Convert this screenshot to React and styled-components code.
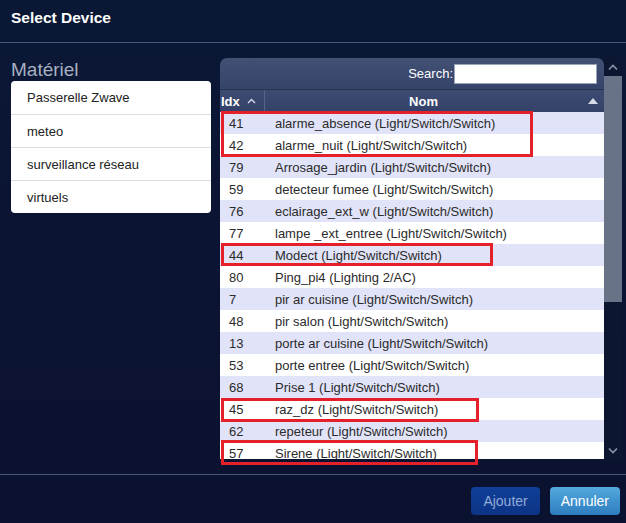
import React from 'react';
import styled, { createGlobalStyle } from 'styled-components';

const GlobalStyle = createGlobalStyle`
  html, body {
    margin: 0;
    padding: 0;
    background: #0a1433;
    font-family: "Liberation Sans", Arial, sans-serif;
  }
`;

const devices = [
  { idx: 41, name: 'alarme_absence (Light/Switch/Switch)' },
  { idx: 42, name: 'alarme_nuit (Light/Switch/Switch)' },
  { idx: 79, name: 'Arrosage_jardin (Light/Switch/Switch)' },
  { idx: 59, name: 'detecteur fumee (Light/Switch/Switch)' },
  { idx: 76, name: 'eclairage_ext_w (Light/Switch/Switch)' },
  { idx: 77, name: 'lampe _ext_entree (Light/Switch/Switch)' },
  { idx: 44, name: 'Modect (Light/Switch/Switch)' },
  { idx: 80, name: 'Ping_pi4 (Lighting 2/AC)' },
  { idx: 7, name: 'pir ar cuisine (Light/Switch/Switch)' },
  { idx: 48, name: 'pir salon (Light/Switch/Switch)' },
  { idx: 13, name: 'porte ar cuisine (Light/Switch/Switch)' },
  { idx: 53, name: 'porte entree (Light/Switch/Switch)' },
  { idx: 68, name: 'Prise 1 (Light/Switch/Switch)' },
  { idx: 45, name: 'raz_dz (Light/Switch/Switch)' },
  { idx: 62, name: 'repeteur (Light/Switch/Switch)' },
  { idx: 57, name: 'Sirene (Light/Switch/Switch)' },
];

const hardware = ['Passerelle Zwave', 'meteo', 'surveillance réseau', 'virtuels'];

// annotation boxes drawn over the rows (row index, row count, width)
const marks = [
  { row: 0, count: 2, width: 312, dy: -1, extra: 2 },
  { row: 6, count: 1, width: 272, dy: -1, extra: 1 },
  { row: 13, count: 1, width: 258, dy: 0, extra: 2 },
  { row: 15, count: 1, width: 257, dy: -2, extra: 3 },
];

const ROW_H = 22;
const HEAD_H = 54; // toolbar + column header, above the first row

const Page = styled.div`
  width: 626px;
  height: 523px;
  display: flex;
  flex-direction: column;
  background: linear-gradient(180deg, #0a1836 0%, #0b1432 50%, #0b1230 100%);
  overflow: hidden;
`;

const Header = styled.div`
  height: 43px;
  flex: none;
  display: flex;
  align-items: center;
  padding: 0 11px 6px;
  box-sizing: border-box;
  border-bottom: 1px solid #48587a;
  color: #ffffff;
  font-size: 15.5px;
  font-weight: bold;
`;

const Body = styled.div`
  flex: 1;
  display: flex;
  gap: 9px;
  padding: 15px 4px 0 11px;
  border-bottom: 1px solid #48587a;
`;

const LeftColumn = styled.div`
  width: 200px;
  flex: none;
  display: flex;
  flex-direction: column;
`;

const Legend = styled.div`
  color: #a8b0c2;
  font-size: 19px;
  line-height: 23px;
  height: 23px;
`;

const HwList = styled.div`
  background: #ffffff;
  border-radius: 4px;
  display: flex;
  flex-direction: column;
`;

const HwItem = styled.div`
  height: 33px;
  display: flex;
  align-items: center;
  padding-left: 16px;
  font-size: 13px;
  color: #222;
  border-top: ${(p) => (p.$first ? 'none' : '1px solid #dddddd')};
  box-sizing: border-box;
`;

const TableArea = styled.div`
  position: relative;
  display: flex;
  height: 401px;
`;

const TablePanel = styled.div`
  width: 384px;
  display: flex;
  flex-direction: column;
  overflow: hidden;
`;

const Toolbar = styled.div`
  height: 31px;
  flex: none;
  display: flex;
  align-items: center;
  justify-content: flex-end;
  padding-right: 7px;
  border-radius: 7px 7px 0 0;
  background: linear-gradient(180deg, #425074 0%, #36446a 100%);
  border-bottom: 1px solid #26314f;
  color: #ffffff;
  font-size: 13px;
`;

const SearchInput = styled.div`
  width: 141px;
  height: 18px;
  margin-left: 1px;
  background: #ffffff;
  border: 1px solid #9aa3b8;
`;

const HeadRow = styled.div`
  height: 22px;
  flex: none;
  display: flex;
  background: linear-gradient(180deg, #3d4b72 0%, #34426a 100%);
  color: #ffffff;
  font-size: 13px;
  font-weight: bold;
`;

const HeadCell = styled.div`
  width: ${(p) => p.$width};
  flex: ${(p) => (p.$grow ? 1 : 'none')};
  display: flex;
  align-items: center;
  justify-content: ${(p) => (p.$center ? 'center' : 'flex-start')};
  padding-left: ${(p) => (p.$center ? '0' : '1px')};
  position: relative;
  border-right: ${(p) => (p.$divider ? '1px solid #56648a' : 'none')};
  box-sizing: border-box;
`;

const HeadLabel = styled.span`
  margin-right: 22px;
`;

const Chevron = styled.svg`
  margin-left: 7px;
`;

const SortArrow = styled.svg`
  position: absolute;
  right: 6px;
  top: 8px;
`;

const Rows = styled.div`
  flex: 1;
  overflow: hidden;
`;

const Row = styled.div`
  height: ${ROW_H}px;
  display: flex;
  align-items: center;
  background: ${(p) => (p.$odd ? '#ffffff' : '#e1e3f8')};
  color: #2b2b2b;
  font-size: 13px;
`;

const IdxCell = styled.div`
  width: 45px;
  padding-left: 9px;
  box-sizing: border-box;
`;

const NameCell = styled.div`
  padding-left: 10px;
`;

const Mark = styled.div`
  position: absolute;
  left: 1px;
  border: 3px solid #e4202a;
  box-sizing: border-box;
  pointer-events: none;
`;

const ScrollBar = styled.div`
  width: 18px;
  display: flex;
  flex-direction: column;
  align-items: center;
  background: #0d1630;
`;

const ScrollArrow = styled.div`
  height: 18px;
  display: flex;
  align-items: center;
  justify-content: center;
  flex: none;
`;

const Thumb = styled.div`
  width: 18px;
  height: 226px;
  background: #697388;
  flex: none;
`;

const Spacer = styled.div`
  flex: 1;
`;

const Footer = styled.div`
  height: 48px;
  flex: none;
  display: flex;
  align-items: center;
  justify-content: flex-end;
  gap: 10px;
  padding-right: 6px;
  padding-top: 4px;
  box-sizing: border-box;
`;

const Button = styled.div`
  height: 28px;
  padding: 0 ${(p) => (p.$primary ? '11px' : '12px')};
  display: flex;
  align-items: center;
  border-radius: 4px;
  font-size: 14px;
  color: ${(p) => (p.$primary ? '#ffffff' : '#92aad6')};
  background: ${(p) =>
    p.$primary
      ? 'linear-gradient(180deg, #54a9de 0%, #2c7dbf 100%)'
      : 'linear-gradient(180deg, #103f98 0%, #0c3486 100%)'};
`;

const ArrowIcon = ({ down }) => (
  <svg width="10" height="7" viewBox="0 0 10 7">
    <path
      d={down ? 'M1 1.5 L5 5.5 L9 1.5' : 'M1 5.5 L5 1.5 L9 5.5'}
      fill="none"
      stroke="#8a93a8"
      strokeWidth="1.6"
    />
  </svg>
);

export default function App() {
  return (
    <>
      <GlobalStyle />
      <Page>
        <Header>Select Device</Header>
        <Body>
          <LeftColumn>
            <Legend>Matériel</Legend>
            <HwList>
              {hardware.map((h, i) => (
                <HwItem key={h} $first={i === 0}>{h}</HwItem>
              ))}
            </HwList>
          </LeftColumn>
          <TableArea>
            <TablePanel>
              <Toolbar>
                Search:
                <SearchInput />
              </Toolbar>
              <HeadRow>
                <HeadCell $width="45px" $divider>
                  Idx
                  <Chevron width="9" height="6" viewBox="0 0 9 6">
                    <path d="M1 5 L4.5 1.5 L8 5" fill="none" stroke="#d8dce8" strokeWidth="1.4" />
                  </Chevron>
                </HeadCell>
                <HeadCell $grow $center>
                  <HeadLabel>Nom</HeadLabel>
                  <SortArrow width="10" height="6" viewBox="0 0 10 6">
                    <path d="M0 6 L5 0 L10 6 Z" fill="#d8dce8" />
                  </SortArrow>
                </HeadCell>
              </HeadRow>
              <Rows>
                {devices.map((d, i) => (
                  <Row key={d.idx} $odd={i % 2 === 1}>
                    <IdxCell>{d.idx}</IdxCell>
                    <NameCell>{d.name}</NameCell>
                  </Row>
                ))}
              </Rows>
            </TablePanel>
            <ScrollBar>
              <ScrollArrow>
                <ArrowIcon />
              </ScrollArrow>
              <Thumb />
              <Spacer />
              <ScrollArrow>
                <ArrowIcon down />
              </ScrollArrow>
            </ScrollBar>
            {marks.map((m) => (
              <Mark
                key={m.row}
                style={{
                  top: HEAD_H + m.row * ROW_H + m.dy,
                  height: m.count * ROW_H + m.extra,
                  width: m.width,
                }}
              />
            ))}
          </TableArea>
        </Body>
        <Footer>
          <Button>Ajouter</Button>
          <Button $primary>Annuler</Button>
        </Footer>
      </Page>
    </>
  );
}
